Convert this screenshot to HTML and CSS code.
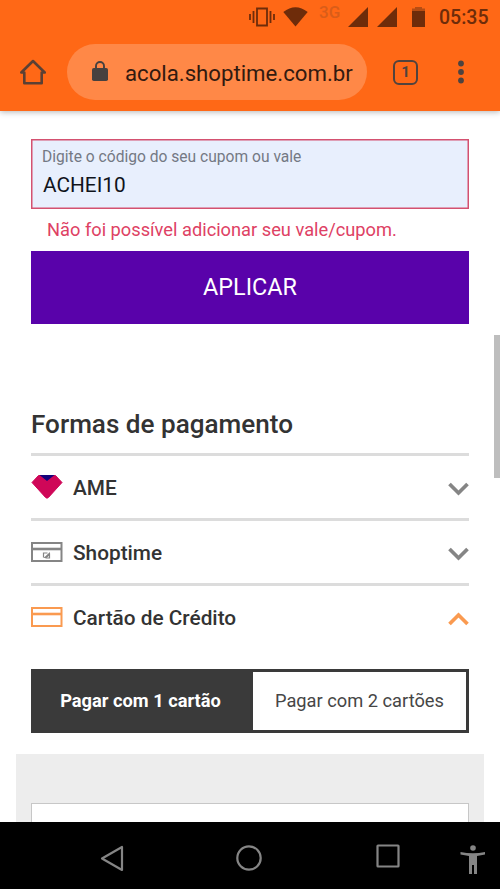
FILE: index.html
```html
<!DOCTYPE html>
<html lang="pt-BR">
<head>
<meta charset="utf-8">
<meta name="viewport" content="width=device-width, initial-scale=1">
<title>Shoptime - Pagamento</title>
<link rel="stylesheet" href="styles.css">
</head>
<body>
<header class="browser">
  <div class="status">
    <svg class="ic-vibrate" width="26" height="20" viewBox="0 0 26 20" fill="none" stroke="#6e2c0a" stroke-width="1.800"><path d="M8 1.500h10v17H8zM4.500 4v12M1 7v6M21.500 4v12M25 7v6"/></svg>
    <svg class="ic-wifi" width="25" height="20" viewBox="0 0 25 20" fill="#6e2c0a"><path d="M.3 5Q12.500-4.500 24.700 5L12.500 19.500z"/></svg>
    <span class="network">3G</span>
    <svg class="ic-signal" width="20" height="20" viewBox="0 0 20 20" fill="#6e2c0a"><path d="M0 20L20 0v20z"/></svg>
    <svg class="ic-signal2" width="20" height="20" viewBox="0 0 20 20" fill="#6e2c0a"><path d="M0 20L20 0v20z"/></svg>
    <svg class="ic-battery" width="13" height="20" viewBox="0 0 13 20"><path fill="#b64d13" d="M0 1.500h3V0h7v1.500h3V4H0z"/><path fill="#6e2c0a" d="M0 4h13v16H0z"/></svg>
    <span class="clock">05:35</span>
  </div>
  <div class="toolbar">
    <svg class="ic-home" width="26" height="26" viewBox="0 0 26 26" fill="none" stroke="#5b4034" stroke-width="2.600" stroke-linejoin="round"><path d="M1.300 13.500L13 2 24.700 13.500H21.700V24.300H4.300V13.500z"/></svg>
    <div class="address">
      <svg width="16" height="21" viewBox="0 0 16 21"><path d="M4 8V5a4 4 0 0 1 8 0v3" fill="none" stroke="#46413f" stroke-width="1.900"/><rect y="7" width="16" height="13" rx="1.800" fill="#46413f"/></svg>
      <span class="url">acola.shoptime.com.br</span>
    </div>
    <div class="tabcount">1</div>
    <svg class="ic-more" width="6" height="24" viewBox="0 0 6 24" fill="#4d4340"><circle cx="3" cy="3.500" r="2.900"/><circle cx="3" cy="12" r="2.900"/><circle cx="3" cy="20.500" r="2.900"/></svg>
  </div>
</header>
<main class="page">
  <label class="coupon">
    <span class="coupon-label">Digite o código do seu cupom ou vale</span>
    <span class="coupon-value">ACHEI10</span>
  </label>
  <p class="error">Não foi possível adicionar seu vale/cupom.</p>
  <button class="apply"><span>APLICAR</span></button>
  <h2 class="title">Formas de pagamento</h2>
  <div class="method">
    <svg width="32" height="24" viewBox="0 0 32 24"><path d="M7.500.5h17L31 7.500 17.500 22.400q-1.500 1.600-3 0L1 7.500z" fill="#cf0758" stroke="#cf0758" stroke-linejoin="round"/><path d="M8.500 0h15L16 6z" fill="#15037c"/></svg>
    <span class="name">AME</span>
    <svg class="chevron" width="21" height="14" viewBox="0 0 21 14"><path d="M1.500 2l9 9 9-9"/></svg>
  </div>
  <div class="method">
    <svg width="32" height="20" viewBox="0 0 32 20" fill="none" stroke="#858585" stroke-width="2"><path d="M1 1h29.500v18H1z"/><path d="M1 7h29" stroke-width="2.600"/><path d="M12.500 15.500V11h4M18.500 11.500v4.500h-4" stroke-width="1.200"/><path d="M12.500 16l6.500-6v3l-3.500 3z" fill="#858585" stroke="none"/></svg>
    <span class="name">Shoptime</span>
    <svg class="chevron" width="21" height="14" viewBox="0 0 21 14"><path d="M1.500 2l9 9 9-9"/></svg>
  </div>
  <div class="method open">
    <svg width="32" height="20" viewBox="0 0 32 20" fill="none" stroke="#fa9a50" stroke-width="2"><path d="M1 1h29.500v18H1z"/><path d="M1 7h29" stroke-width="2.600"/></svg>
    <span class="name">Cartão de Crédito</span>
    <svg class="chevron" width="21" height="14" viewBox="0 0 21 14"><path d="M1.500 12l9-9 9 9"/></svg>
  </div>
  <div class="tabs">
    <div class="tab selected"><span>Pagar com 1 cartão</span></div>
    <div class="tab"><span>Pagar com 2 cartões</span></div>
  </div>
  <div class="panel"><div class="card"></div></div>
  <div class="scrollbar"></div>
</main>
<footer class="nav">
  <svg class="ic-back" width="24" height="28" viewBox="0 0 24 28"><path d="M22 2v23L2 13.500z"/></svg>
  <svg class="ic-circle" width="28" height="28" viewBox="0 0 28 28"><circle cx="14" cy="14" r="11.700"/></svg>
  <svg class="ic-square" width="24" height="24" viewBox="0 0 24 24"><rect x="1.500" y="1.500" width="21" height="21" rx=".5"/></svg>
  <svg class="ic-person" width="26" height="30" viewBox="0 0 26 30"><circle cx="13" cy="3" r="2.800"/><path d="M.5 7Q13 9.500 25 7v2.500L17 11v18h-3v-9h-2v9H9V11L.5 9.500z"/></svg>
</footer>
</body>
</html>
```
FILE: styles.css
```css
* { box-sizing: border-box; }
body {
  margin: 0;
  width: 500px;
  height: 889px;
  overflow: hidden;
  display: flex;
  flex-direction: column;
  background: #fff;
  font-family: Roboto, "Liberation Sans", sans-serif;
  color: #333;
}
svg { display: block; flex: none; }
span { white-space: nowrap; }
.browser {
  height: 111px;
  flex: none;
  background: #ff6816;
  box-shadow: 0 1px 6px rgba(0, 0, 0, .3);
  z-index: 1;
}
.status { height: 35px; display: flex; align-items: flex-start; padding: 7px 0 0 249px; color: #6e2c0a; }
.ic-wifi { margin-left: 8px; }
.network { margin: -6px 0 0 11px; width: 22px; font-size: 17px; line-height: 22px; font-weight: 500; color: #d95d19; }
.ic-signal { margin-left: 7px; }
.ic-signal2 { margin-left: 9px; }
.ic-battery { margin-left: 15px; }
.clock { margin: -1px 0 0 14px; font-size: 19.500px; line-height: 24px; font-weight: 500; }
.toolbar { display: flex; align-items: center; height: 76px; padding-left: 20px; }
.ic-home { margin-top: -2px; }
.address {
  display: flex;
  align-items: center;
  width: 300px;
  height: 56px;
  margin: -2px 0 0 21px;
  padding-left: 25px;
  border-radius: 28px;
  background: #ff8847;
}
.url { margin: 1px 0 0 17px; font-size: 22.200px; color: #321a10; }
.address svg { margin-top: -2px; }
.tabcount {
  width: 25px;
  height: 25px;
  margin: -2px 0 0 26px;
  border: 2.500px solid #51433e;
  border-radius: 6px;
  font-size: 15px;
  line-height: 20px;
  font-weight: 700;
  text-align: center;
  color: #51433e;
}
.ic-more { margin: -2px 0 0 40px; }
.page { position: relative; height: 711px; flex: none; overflow: hidden; padding: 28px 31px 0; }
.coupon {
  display: flex;
  flex-direction: column;
  height: 70px;
  padding: 7px 10px;
  border: 1px solid #d45170;
  box-shadow: inset 0 0 0 .5px #d45170;
  background: #e8effd;
}
.coupon-label { font-size: 15.600px; line-height: 20px; color: #747984; }
.coupon-value { margin: 6px 0 0 1px; font-size: 20.800px; line-height: 24px; color: #10131b; }
.error { margin: 9px 0 0 16px; font-size: 18.250px; line-height: 24px; color: #de4164; white-space: nowrap; }
.apply {
  display: block;
  width: 438px;
  height: 73px;
  margin: 8.500px 0 0;
  padding: 0;
  border: 0;
  background: #5902aa;
  font-family: inherit;
  font-size: 23.400px;
  color: #fff;
}
.title { margin: 83.500px 0 0; height: 46px; font-size: 26.100px; line-height: 34px; font-weight: 500; white-space: nowrap; }
.method { display: flex; align-items: center; height: 65px; border-top: 3px solid #dcdcdc; }
.name { margin: 2px 0 0 10px; font-size: 20.800px; font-weight: 500; }
.chevron { margin: 3px 0 0 auto; fill: none; stroke: #858585; stroke-width: 3.700; }
.open .chevron { stroke: #fa9a50; }
.tabs { display: grid; grid-template-columns: 219px 1fr; height: 64px; margin-top: 21px; border: 3px solid #3a3a3a; }
.tab { display: grid; place-items: center; font-size: 18.250px; color: #464646; padding-bottom: 1px; }
.selected { padding-right: 6px; background: #3a3a3a; color: #fff; font-weight: 700; }
.panel { height: 100px; margin: 21px -15px 0; padding: 49px 15px 0; background: #ededed; }
.card { height: 60px; border: 1px solid #c7c7c7; background: #fff; }
.scrollbar { position: absolute; right: 0; top: 224px; width: 6px; height: 143px; background: #bebebe; }
.nav { height: 67px; flex: none; display: flex; align-items: center; background: #000; padding-left: 100px; }
.nav svg { fill: none; stroke: #858585; stroke-width: 2.200; stroke-linejoin: round; }
.ic-back { margin-top: 7px; }
.ic-circle { margin: 5px 0 0 111px; }
.ic-square { margin-left: 113px; }
.nav .ic-person { margin: 9px 0 0 60px; fill: #858585; stroke: none; }
```
